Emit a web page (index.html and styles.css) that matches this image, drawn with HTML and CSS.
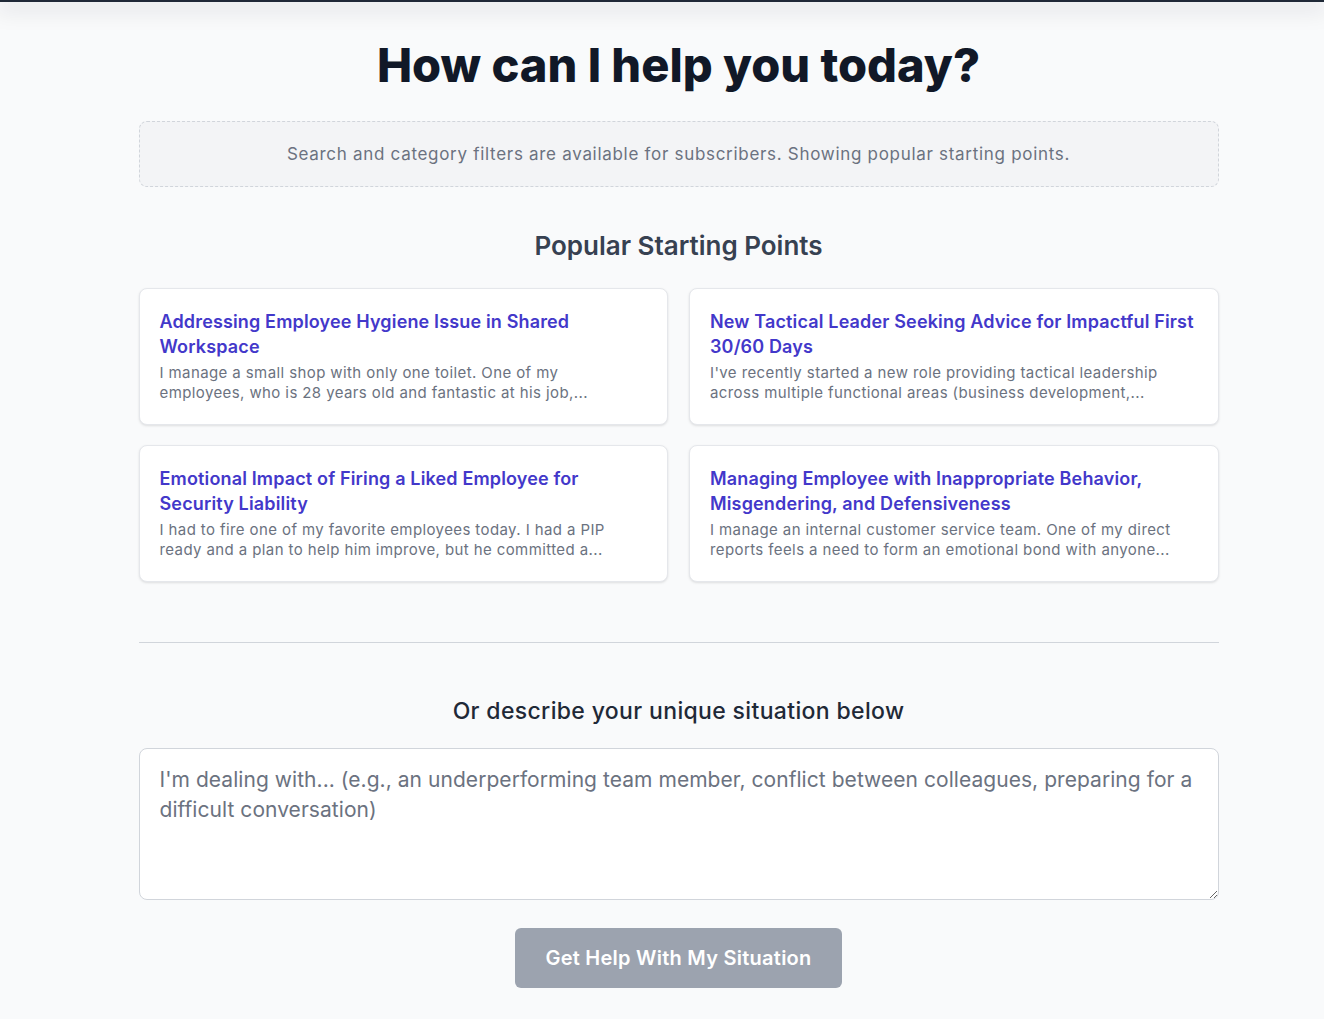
FILE: index.html
```html
<!DOCTYPE html>
<html lang="en">
<head>
  <meta charset="UTF-8">
  <meta name="viewport" content="width=device-width, initial-scale=1.0">
  <title>How can I help you today?</title>
  <link rel="stylesheet" href="styles.css">
</head>
<body>

  <div class="top-bar"></div>

  <div class="page-wrap">
    <main class="page">
      <h1 class="page-title">How can I help you today?</h1>

      <div class="notice">
        Search and category filters are available for subscribers. Showing popular starting points.
      </div>

      <h2 class="section-title">Popular Starting Points</h2>

      <div class="card-grid">
        <a class="card" href="#">
          <div class="card-title">Addressing Employee Hygiene Issue in Shared Workspace</div>
          <p class="card-text">I manage a small shop with only one toilet. One of my employees, who is 28 years old and fantastic at his job,...</p>
        </a>
        <a class="card" href="#">
          <div class="card-title">New Tactical Leader Seeking Advice for Impactful First 30/60 Days</div>
          <p class="card-text">I've recently started a new role providing tactical leadership across multiple functional areas (business development,...</p>
        </a>
        <a class="card" href="#">
          <div class="card-title">Emotional Impact of Firing a Liked Employee for Security Liability</div>
          <p class="card-text">I had to fire one of my favorite employees today. I had a PIP ready and a plan to help him improve, but he committed a...</p>
        </a>
        <a class="card" href="#">
          <div class="card-title">Managing Employee with Inappropriate Behavior, Misgendering, and Defensiveness</div>
          <p class="card-text">I manage an internal customer service team. One of my direct reports feels a need to form an emotional bond with anyone...</p>
        </a>
      </div>

      <hr class="divider">

      <h3 class="describe-title">Or describe your unique situation below</h3>

      <form class="describe-form">
        <textarea class="situation" placeholder="I'm dealing with... (e.g., an underperforming team member, conflict between colleagues, preparing for a difficult conversation)"></textarea>
        <button type="submit" class="submit-btn" disabled>Get Help With My Situation</button>
      </form>
    </main>
  </div>

</body>
</html>
```

FILE: styles.css
```css
body {
  font-family: 'Inter', 'Open Sans', sans-serif;
  background-color: #f9fafb;
  color: #111827;
  margin: 0;
}

.top-bar {
  height: 2px;
  background-color: #1f2937;
  box-shadow: 0 4px 22px 4px rgba(17, 24, 39, 0.13);
}

.page-wrap {
  padding-left: 33px;
}

.page {
  max-width: 1080px;
  margin: 0 auto;
  padding-top: 35px;
}

.page-title {
  font-size: 47px;
  font-weight: 800;
  line-height: 56px;
  text-align: center;
  margin: 0 0 28px;
  color: #111827;
}

.notice {
  background-color: #f3f4f6;
  border: 1px dashed #d1d5db;
  border-radius: 8px;
  padding: 20px;
  text-align: center;
  font-size: 17px;
  letter-spacing: 0.7px;
  line-height: 24px;
  color: #6b7280;
}

.section-title {
  font-size: 26px;
  font-weight: 600;
  line-height: 32px;
  text-align: center;
  color: #374151;
  margin: 43px 0 26px;
}

.card-grid {
  display: grid;
  grid-template-columns: 1fr 1fr;
  gap: 20px 21px;
}

.card {
  display: block;
  background-color: #ffffff;
  border: 1px solid #e5e7eb;
  border-radius: 8px;
  padding: 20px 20px 21px;
  text-decoration: none;
  box-shadow: 0 1px 3px rgba(0, 0, 0, 0.08), 0 1px 2px rgba(0, 0, 0, 0.04);
}

.card-title {
  font-size: 18px;
  font-weight: 600;
  letter-spacing: 0.15px;
  line-height: 25px;
  color: #4338ca;
}

.card-text {
  font-size: 15px;
  letter-spacing: 0.4px;
  line-height: 20px;
  color: #6b7280;
  margin: 4px 0 0;
  padding-right: 4px;
}

.divider {
  border: none;
  border-top: 1px solid #d1d5db;
  margin: 60px 0 0;
}

.describe-title {
  font-size: 23px;
  font-weight: 500;
  letter-spacing: 0.35px;
  line-height: 28px;
  text-align: center;
  color: #1f2937;
  margin: 54px 0 23px;
}

.describe-form {
  display: flex;
  flex-direction: column;
  align-items: center;
}

.situation {
  display: block;
  box-sizing: border-box;
  width: 100%;
  height: 152px;
  padding: 16px 20px 15px;
  border: 1px solid #d1d5db;
  border-radius: 8px;
  background-color: #ffffff;
  font-family: inherit;
  font-size: 21px;
  letter-spacing: 0.05px;
  line-height: 30px;
  color: #111827;
  resize: vertical;
}

.situation::placeholder {
  color: #6b7280;
}

.submit-btn {
  margin-top: 28px;
  padding: 0 30px;
  height: 60px;
  border: none;
  border-radius: 6px;
  background-color: #9ca3af;
  color: #ffffff;
  font-family: inherit;
  font-size: 20px;
  font-weight: 600;
  letter-spacing: 0.25px;
  cursor: not-allowed;
}
```
